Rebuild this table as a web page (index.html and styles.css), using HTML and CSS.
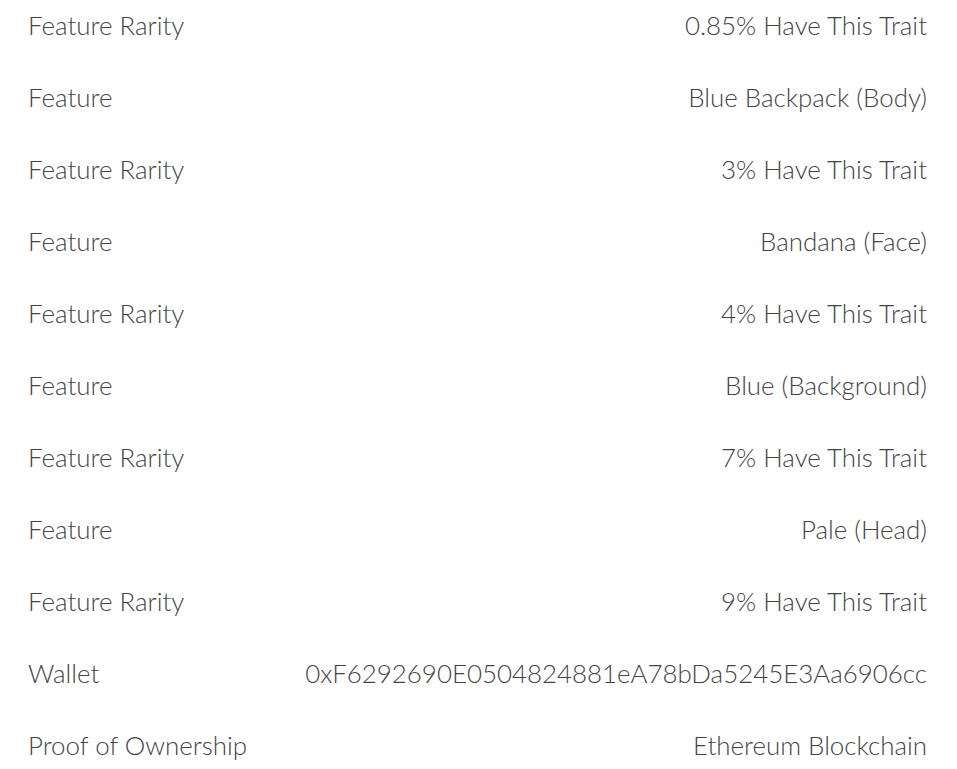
FILE: index.html
```html
<!DOCTYPE html>
<html>
<head>
<meta charset="utf-8">
<link rel="stylesheet" href="styles.css">
</head>
<body>
<div class="table">
  <div class="row"><span class="label">Feature Rarity</span><span class="value">0.85% Have This Trait</span></div>
  <div class="row"><span class="label">Feature</span><span class="value">Blue Backpack (Body)</span></div>
  <div class="row"><span class="label">Feature Rarity</span><span class="value">3% Have This Trait</span></div>
  <div class="row"><span class="label">Feature</span><span class="value">Bandana (Face)</span></div>
  <div class="row"><span class="label">Feature Rarity</span><span class="value">4% Have This Trait</span></div>
  <div class="row"><span class="label">Feature</span><span class="value">Blue (Background)</span></div>
  <div class="row"><span class="label">Feature Rarity</span><span class="value">7% Have This Trait</span></div>
  <div class="row"><span class="label">Feature</span><span class="value">Pale (Head)</span></div>
  <div class="row"><span class="label">Feature Rarity</span><span class="value">9% Have This Trait</span></div>
  <div class="row"><span class="label">Wallet</span><span class="value">0xF6292690E0504824881eA78bDa5245E3Aa6906cc</span></div>
  <div class="row"><span class="label">Proof of Ownership</span><span class="value">Ethereum Blockchain</span></div>
</div>
</body>
</html>
```
FILE: styles.css
```css
html, body {
  margin: 0;
  padding: 0;
  background: #ffffff;
}
body {
  font-family: "Lato", "Noto Sans", sans-serif;
  font-weight: 300;
  color: #444444;
  font-size: 25.9px;
}
.table {
  display: flex;
  flex-direction: column;
  padding: 0 30px 0 28px;
}
.row {
  display: flex;
  justify-content: space-between;
  align-items: center;
  height: 72px;
  box-sizing: border-box;
  padding: 11px 0 33px;
  line-height: 28px;
}
.label, .value {
  white-space: nowrap;
}
```
